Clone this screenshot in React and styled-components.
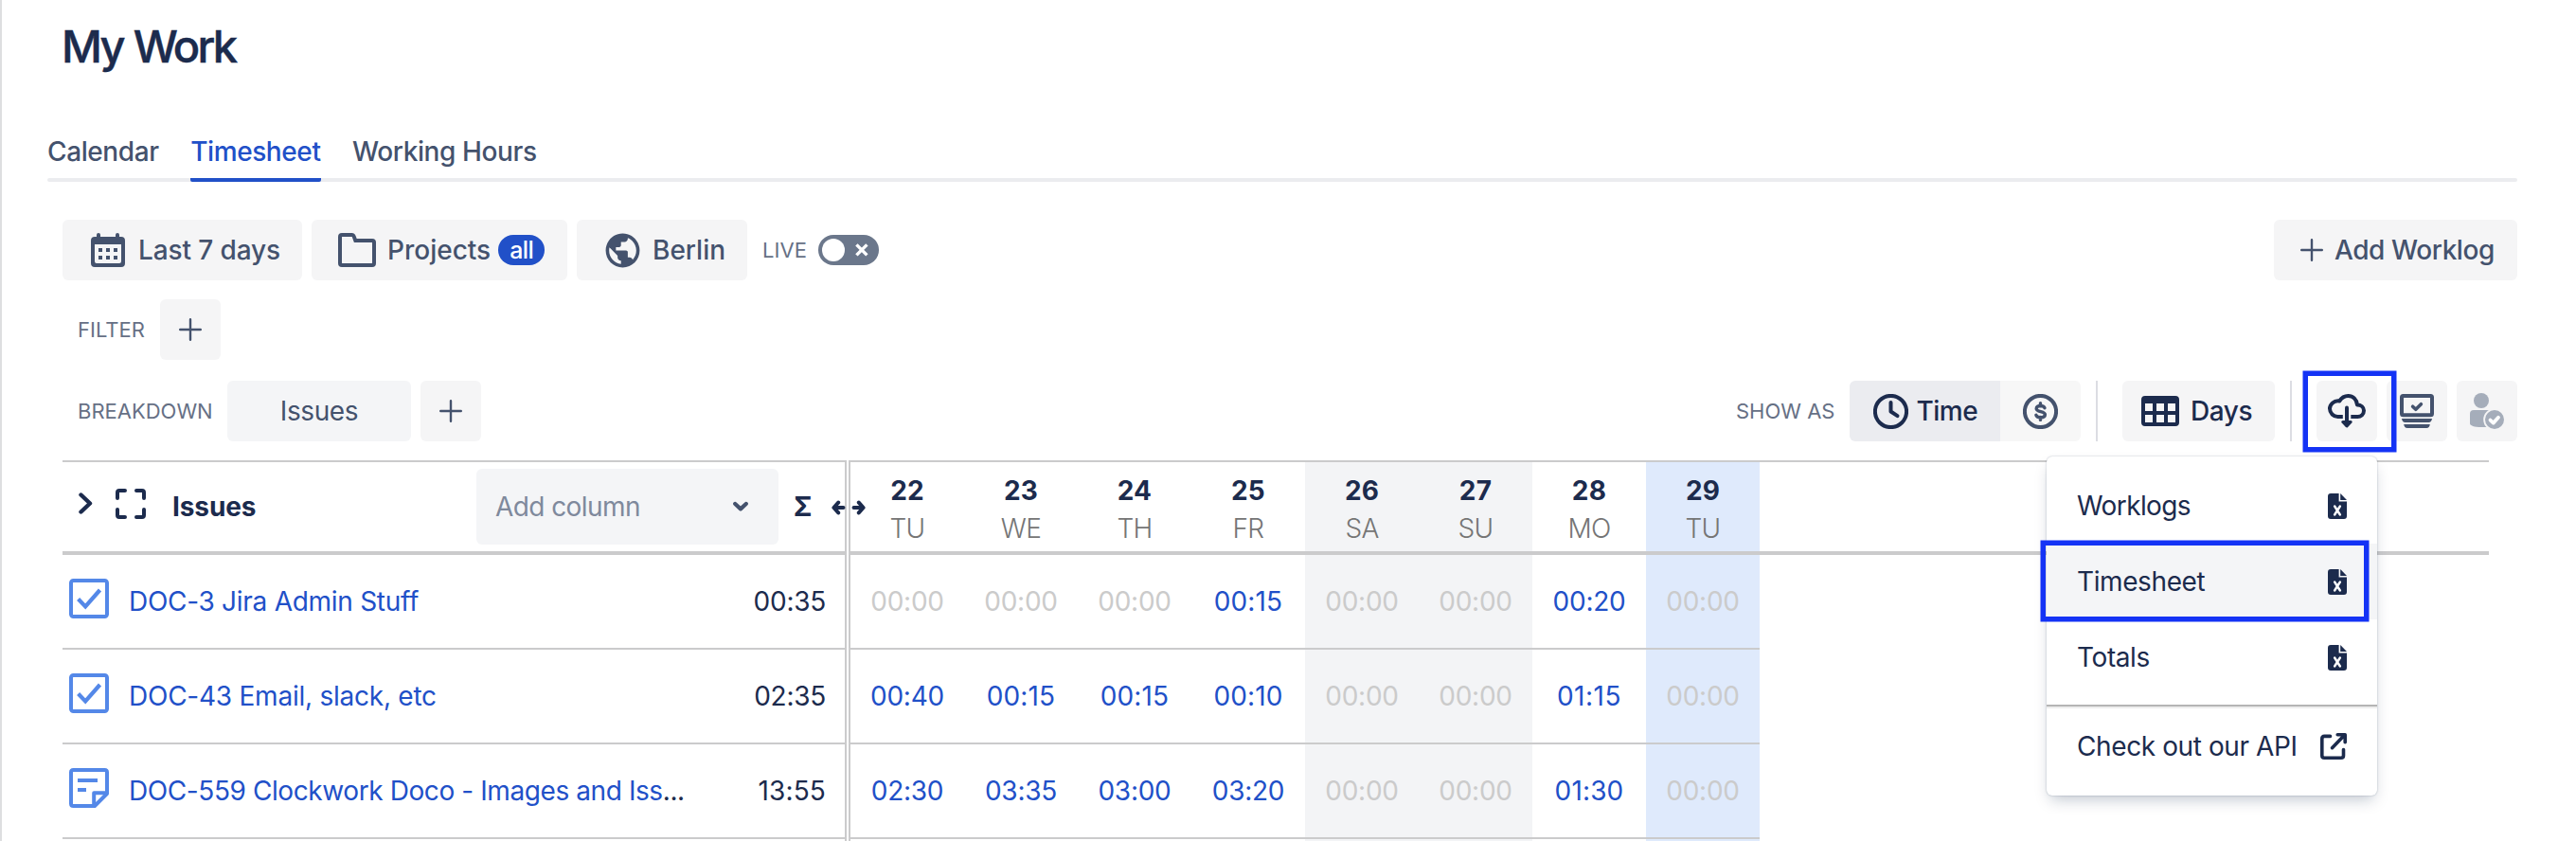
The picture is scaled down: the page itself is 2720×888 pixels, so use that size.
import React from 'react';
import styled, { createGlobalStyle } from 'styled-components';
import { MdPublic } from 'react-icons/md';

const GlobalStyle = createGlobalStyle`
  * {
    box-sizing: border-box;
  }
  body {
    margin: 0;
    background-color: white;
    font-family: Inter, "Liberation Sans", sans-serif;
    font-size: 28px;
    letter-spacing: -0.4px;
    color: #1c2b4d;
  }
  svg {
    display: block;
    flex: none;
  }
`;

const Page = styled.div`
  position: relative;
  width: 2720px;
  height: 888px;
  overflow: hidden;
  padding: 18px 62px 0 48px;
  border-left: 2px solid #dddee0;
`;

const Title = styled.h1`
  margin: 0 0 53px 15px;
  font-size: 47px;
  font-weight: 500;
  line-height: 61px;
  letter-spacing: -2.7px;
  word-spacing: 1px;
  -webkit-text-stroke: 0.5px currentColor;
`;

const Tabs = styled.nav`
  display: flex;
  gap: 33.5px;
  height: 60px;
  position: relative;
  &::after {
    content: '';
    position: absolute;
    left: 0;
    right: 0;
    bottom: 0;
    height: 4px;
    border-radius: 2px;
    background-color: #ebecef;
  }
`;

const Tab = styled.a`
  position: relative;
  z-index: 1;
  height: 60px;
  line-height: 56px;
  font-weight: 500;
  white-space: nowrap;
  color: ${({ $active }) => ($active ? '#2150c8' : '#44526d')};
  border-bottom: 4px solid ${({ $active }) => ($active ? '#2150c8' : 'transparent')};
  border-radius: 2px;
`;

const Bar = styled.div`
  display: flex;
  align-items: center;
  height: 64px;
  margin-top: ${({ $top }) => $top}px;
  padding-left: ${({ $left }) => $left || 16}px;
  gap: 10px;
`;

const Label = styled.span`
  width: ${({ $width }) => $width}px;
  margin-right: -10px;
  font-size: 22px;
  letter-spacing: 0;
  white-space: nowrap;
  color: #667085;
`;

const LiveLabel = styled(Label)`
  width: 59px;
  margin-left: 6px;
  letter-spacing: 0.1px;
`;

const Button = styled.button`
  display: flex;
  align-items: center;
  position: relative;
  flex: none;
  width: ${({ $width }) => $width || 64}px;
  height: 64px;
  padding: 0 0 0 ${({ $pad }) => $pad}px;
  gap: ${({ $gap }) => $gap || 12}px;
  border: none;
  border-radius: 6px;
  background-color: #f5f5f6;
  color: ${({ $dark }) => ($dark ? '#1c2b4d' : '#44526d')};
  font-family: inherit;
  font-size: 28px;
  font-weight: 500;
  letter-spacing: ${({ $spacing }) => $spacing || 0}px;
  white-space: nowrap;
`;

const BreakdownButton = styled(Button)`
  justify-content: center;
  background-color: #f4f5f7;
  font-weight: 400;
`;

const IconButton = styled(Button)`
  justify-content: center;
  z-index: ${({ $raised }) => ($raised ? 1 : 0)};
`;

const Badge = styled.span`
  width: 49px;
  height: 32px;
  margin-left: -4px;
  border-radius: 16px;
  background-color: #2150c8;
  color: white;
  font-size: 25px;
  line-height: 32px;
  text-align: center;
  letter-spacing: -0.6px;
`;

const GlobeIcon = styled(MdPublic)`
  width: 43px;
  height: 43px;
  margin: 0 -3.5px;
`;

const Toggle = styled.div`
  display: flex;
  align-items: center;
  justify-content: space-between;
  width: 64px;
  height: 32px;
  padding: 0 10px 0 4px;
  border-radius: 16px;
  background-color: #6b778b;
`;

const Knob = styled.span`
  width: 24px;
  height: 24px;
  border-radius: 50%;
  background-color: white;
`;

const Tools = styled.div`
  display: flex;
  align-items: center;
  gap: 10px;
  margin-left: auto;
`;

const Segments = styled.div`
  display: flex;
`;

const Segment = styled(Button)`
  border-radius: ${({ $last }) => ($last ? '0 6px 6px 0' : '6px 0 0 6px')};
  background-color: ${({ $active }) => ($active ? '#ebecf0' : '#f7f7f7')};
`;

const Divider = styled.i`
  width: 2px;
  height: 64px;
  margin: 0 16px 0 6px;
  background-color: #dcdde3;
`;

const Highlight = styled.span`
  position: absolute;
  left: ${({ $x }) => $x}px;
  top: ${({ $y }) => $y}px;
  width: ${({ $width }) => $width}px;
  height: ${({ $height }) => $height}px;
  border: 5px solid #1433f5;
  box-shadow: 0 0 0 0.5px #1433f5;
  pointer-events: none;
`;

const Table = styled.section`
  display: flex;
  width: 2562px;
  margin: 20px 0 0 16px;
`;

const IssuesPane = styled.div`
  position: relative;
  width: 828px;
  margin-right: 2px;
  border-right: 2px solid #cbcbcc;
`;

const DaysPane = styled.div`
  flex: 1;
  border-left: 2px solid #cbcbcc;
`;

const HeaderRow = styled.div`
  display: flex;
  align-items: center;
  height: 100px;
  border-top: 2px solid #cbcbcc;
  border-bottom: 4px solid #cbcbcc;
`;

const IssuesHeader = styled(HeaderRow)`
  padding: 0 35px 0 16px;
  font-weight: 700;
  svg {
    margin-bottom: 6px;
  }
`;

const HeaderName = styled.span`
  margin-left: 28px;
  letter-spacing: -0.1px;
`;

const ColumnSelect = styled.div`
  display: flex;
  align-items: center;
  justify-content: space-between;
  width: 319px;
  height: 80px;
  margin: 0 16px 0 auto;
  padding: 0 32px 0 20px;
  border-radius: 6px;
  background-color: #f4f5f7;
  color: #7f899c;
  font-weight: 400;
  letter-spacing: -0.57px;
  svg {
    margin-bottom: 0;
  }
`;

const ResizeHandle = styled.div`
  position: absolute;
  left: 812px;
  top: 42px;
  z-index: 1;
`;

const Day = styled.div`
  width: 120px;
  height: 94px;
  padding-top: 10px;
  line-height: 40px;
  text-align: center;
  background-color: ${({ $bg }) => $bg};
`;

const DayNumber = styled.div`
  font-weight: 700;
  letter-spacing: 0.2px;
`;

const DayName = styled.div`
  font-weight: 300;
  letter-spacing: -0.7px;
  color: #757575;
`;

const Row = styled.div`
  display: flex;
  align-items: center;
  height: 100px;
  border-bottom: 2px solid #cbcbcc;
  white-space: nowrap;
`;

const IssueRow = styled(Row)`
  padding: 0 20px 0 7px;
  svg {
    margin: 0 21px 6px 0;
  }
`;

const DaysRow = styled(Row)`
  width: 960px;
`;

const IssueLink = styled.a`
  color: #2150c8;
  letter-spacing: ${({ $spacing }) => $spacing}px;
`;

const Sum = styled.span`
  margin-left: auto;
  letter-spacing: ${({ $spacing }) => $spacing}px;
`;

const Cell = styled.div`
  width: 120px;
  height: 98px;
  line-height: 98px;
  text-align: center;
  letter-spacing: ${({ $spacing }) => $spacing}px;
  color: ${({ $empty }) => ($empty ? '#cbcbcb' : '#2150c8')};
  background-color: ${({ $bg }) => $bg};
`;

const Menu = styled.div`
  position: absolute;
  left: 2159px;
  top: 482px;
  z-index: 2;
  width: 349px;
  height: 358px;
  padding: 12px 0;
  border-radius: 6px;
  background-color: white;
  box-shadow: 0 0 2px rgba(9, 30, 66, 0.31), 0 8px 16px -4px rgba(9, 30, 66, 0.25);
`;

const MenuItem = styled.div`
  position: relative;
  display: flex;
  align-items: center;
  justify-content: space-between;
  height: 80px;
  padding: 0 32px;
  background-color: ${({ $selected }) => ($selected ? '#f4f5f7' : 'transparent')};
  letter-spacing: ${({ $spacing }) => $spacing || -0.4}px;
`;

const MenuLine = styled.hr`
  height: 4px;
  margin: 10px 0 0;
  border: none;
  border-top: 2px solid #b5b5b5;
  background-color: #eeeeee;
`;

const days = [
  { number: 22, name: 'TU' },
  { number: 23, name: 'WE' },
  { number: 24, name: 'TH' },
  { number: 25, name: 'FR' },
  { number: 26, name: 'SA', bg: '#f3f4f6' },
  { number: 27, name: 'SU', bg: '#f3f4f6' },
  { number: 28, name: 'MO' },
  { number: 29, name: 'TU', bg: '#dfeafc' },
];

const issues = [
  {
    name: 'DOC-3 Jira Admin Stuff',
    spacing: -0.28,
    total: '00:35',
    times: ['00:00', '00:00', '00:00', '00:15', '00:00', '00:00', '00:20', '00:00'],
  },
  {
    name: 'DOC-43 Email, slack, etc',
    spacing: -0.24,
    total: '02:35',
    times: ['00:40', '00:15', '00:15', '00:10', '00:00', '00:00', '01:15', '00:00'],
  },
  {
    name: 'DOC-559 Clockwork Doco - Images and Iss',
    spacing: -0.41,
    cut: true,
    note: true,
    total: '13:55',
    times: ['02:30', '03:35', '03:00', '03:20', '00:00', '00:00', '01:30', '00:00'],
  },
];

// the digit 1 is narrow, so times that hold it get a little more air
const timeSpacing = (time) => -0.26 + 0.4 * (time.split('1').length - 1);

const PlusIcon = () => (
  <svg width="24" height="24" fill="none" stroke="currentColor" strokeWidth="2.4" strokeLinecap="round">
    <path d="M12 1.2v21.6M1.2 12h21.6" />
  </svg>
);

const CalendarIcon = () => (
  <svg width="36" height="36" fill="currentColor">
    <path d="M6 4V2a2 2 0 0 1 4 0v2h16V2a2 2 0 0 1 4 0v2h2a4 4 0 0 1 4 4v24a4 4 0 0 1-4 4H4a4 4 0 0 1-4-4V8a4 4 0 0 1 4-4zM4 12v18a2 2 0 0 0 2 2h24a2 2 0 0 0 2-2V12z" fillRule="evenodd" />
    <path d="M8 16h4v4H8zM16 16h4v4h-4zM24 16h4v4h-4zM8 24h4v4H8zM16 24h4v4h-4zM24 24h4v4h-4z" />
  </svg>
);

const FolderIcon = () => (
  <svg width="40" height="36" fill="none" stroke="currentColor" strokeWidth="4">
    <path d="M4 2h10.5q1.6 0 2.2 1.6L18.3 8H36q2 0 2 2v22q0 2-2 2H4q-2 0-2-2V4q0-2 2-2z" />
  </svg>
);

const CrossIcon = () => (
  <svg width="16" height="16" fill="none" stroke="white" strokeWidth="3.4">
    <path d="M2.4 2.4l11 11M13.4 2.4l-11 11" />
  </svg>
);

const ClockIcon = () => (
  <svg width="37" height="37" fill="none" stroke="currentColor" strokeWidth="4" strokeLinecap="round" strokeLinejoin="round">
    <circle cx="18.5" cy="18.5" r="16.6" />
    <path d="M18.5 9v9.5l7 4.6" />
  </svg>
);

const DollarIcon = () => (
  <svg width="37" height="37" fill="none" stroke="currentColor" strokeLinecap="round">
    <circle cx="18.5" cy="18.5" r="16.6" strokeWidth="4" />
    <path d="M18.5 9.8v3M18.5 24.4v3M23 14.7c-.8-1.6-2.6-2.2-4.6-2.2-2.4 0-4.2 1-4.2 2.9 0 4 9.2 2.3 9.2 6.4 0 2-2 3-4.6 3-2.2 0-4.2-.7-4.9-2.5" strokeWidth="3.4" />
  </svg>
);

const GridIcon = () => (
  <svg width="40" height="32" fill="currentColor">
    <path d="M4 0h32a4 4 0 0 1 4 4v24a4 4 0 0 1-4 4H4a4 4 0 0 1-4-4V4a4 4 0 0 1 4-4zM4 8v8h8V8zM16 8v8h8V8zM28 8v8h8V8zM4 20v8h8v-8zM16 20v8h8v-8zM28 20v8h8v-8z" fillRule="evenodd" />
  </svg>
);

const CloudIcon = () => (
  <svg width="40" height="36" fill="none" stroke="currentColor" strokeWidth="4" strokeLinejoin="round">
    <path d="M15.8 24H10.5A8.5 8.5 0 0 1 2 15.6C2 10.8 6.4 6.6 12.3 7.5 14.3 4.2 17.6 2 21.5 2c5 0 8.7 3.6 9.5 9.4 4 0 7 2.6 7 6.2 0 3.7-3 6.4-6.6 6.4h-7.1" />
    <path d="M20 14.5V31" strokeLinecap="round" />
    <path d="M15.8 29.5h8.4L20 34z" fill="currentColor" strokeWidth="3" />
  </svg>
);

const ScreenIcon = () => (
  <svg width="36" height="36" fill="currentColor">
    <rect x="2" y="2" width="32" height="20.3" rx="1.5" fill="none" stroke="currentColor" strokeWidth="4" />
    <path d="M13.6 13.2l3.2 3.1 5.6-5.6" fill="none" stroke="currentColor" strokeWidth="3.6" strokeLinecap="round" strokeLinejoin="round" />
    <path d="M2 26h32q-.6 4-3.6 4H5.6Q2.6 30 2 26zM4.2 32h27.6q-.6 4-3.6 4H7.8q-3 0-3.6-4z" />
  </svg>
);

const PersonIcon = () => (
  <svg width="36" height="38" fill="#a5adba">
    <circle cx="12" cy="8" r="8" />
    <path d="M4 18h16a4 4 0 0 1 4 4v14H12C4.5 36 0 34.5 0 32V22a4 4 0 0 1 4-4z" />
    <circle cx="26" cy="28" r="11.8" fill="#f5f5f6" />
    <circle cx="26" cy="28" r="10" />
    <path d="M21.5 28.6l3.2 3 5.3-5.8" fill="none" stroke="white" strokeWidth="3.8" strokeLinecap="round" strokeLinejoin="round" />
  </svg>
);

const ChevronRightIcon = () => (
  <svg width="16" height="24" fill="none" stroke="currentColor" strokeWidth="4.4" strokeLinecap="round" strokeLinejoin="round">
    <path d="M3.5 2.5l9.5 9-9.5 9" />
  </svg>
);

const ExpandIcon = styled(({ className }) => (
  <svg className={className} width="32" height="32" fill="none" stroke="currentColor" strokeWidth="4" strokeLinecap="round">
    <path d="M10 2H4q-2 0-2 2v6M22 2h6q2 0 2 2v6M30 22v6q0 2-2 2h-6M10 30H4q-2 0-2-2v-6" />
  </svg>
))`
  margin-left: 24px;
`;

const ChevronDownIcon = () => (
  <svg width="16" height="12" fill="none" stroke="#44526d" strokeWidth="4.2" strokeLinecap="round" strokeLinejoin="round">
    <path d="M2.2 3l5.8 5.4L13.8 3" />
  </svg>
);

const ResizeIcon = () => (
  <svg width="36" height="16" fill="none" stroke="currentColor" strokeWidth="4" strokeLinecap="round" strokeLinejoin="round">
    <path d="M12.5 8H3M7.2 2.6L2.4 8l4.8 5.4M23.5 8H33M28.8 2.6L33.6 8l-4.8 5.4" />
  </svg>
);

const TaskIcon = () => (
  <svg width="42" height="42" fill="none" stroke="#5488e8" strokeWidth="4">
    <rect x="2" y="2" width="38" height="38" rx="2.5" />
    <path d="M9.6 21.5l7.6 7.9L32.5 12" strokeWidth="4.2" />
  </svg>
);

const NoteIcon = () => (
  <svg width="42" height="42" fill="none" stroke="#5488e8" strokeWidth="4" strokeLinejoin="round">
    <path d="M4.5 2h33Q40 2 40 4.5V27L27 40H4.5Q2 40 2 37.5v-33Q2 2 4.5 2z" />
    <path d="M9 13h21M9 23h9M26.2 39V26.2H40" />
  </svg>
);

const SheetIcon = () => (
  <svg width="20" height="27" fill="currentColor">
    <path d="M3 0h8.6v8.6H20V24a3 3 0 0 1-3 3H3a3 3 0 0 1-3-3V3a3 3 0 0 1 3-3z" />
    <path d="M13.2 0L20 7H13.2z" />
    <path d="M7.2 13.6l5.6 8.8M12.8 13.6l-5.6 8.8" fill="none" stroke="white" strokeWidth="2.6" strokeLinecap="round" />
  </svg>
);

const ExternalIcon = () => (
  <svg width="28" height="28" fill="none" stroke="currentColor" strokeWidth="3.6" strokeLinecap="round" strokeLinejoin="round">
    <path d="M10.5 3.4H4.3q-2.5 0-2.5 2.5V23.7q0 2.5 2.5 2.5H22q2.5 0 2.5-2.5V17.5" />
    <path d="M12.5 15.7L24.5 3.2M18.2 1.8H26.2V9.8" />
  </svg>
);

const Toolbar = () => (
  <>
    <Bar $top={40}>
      <Button $width={253} $pad={30} $gap={14} $spacing={-0.11}><CalendarIcon />Last 7 days</Button>
      <Button $width={270} $pad={28}><FolderIcon />Projects<Badge>all</Badge></Button>
      <Button $width={180} $pad={30} $gap={14}><GlobeIcon />Berlin</Button>
      <LiveLabel>LIVE</LiveLabel>
      <Toggle>
        <Knob />
        <CrossIcon />
      </Toggle>
      <Tools>
        <Button $width={257} $pad={28} $spacing={-0.42}><PlusIcon />Add Worklog</Button>
      </Tools>
    </Bar>

    <Bar $top={20} $left={32}>
      <Label $width={87}>FILTER</Label>
      <IconButton><PlusIcon /></IconButton>
    </Bar>

    <Bar $top={22} $left={32}>
      <Label $width={158}>BREAKDOWN</Label>
      <BreakdownButton $width={194} $spacing={-0.39}>Issues</BreakdownButton>
      <IconButton><PlusIcon /></IconButton>
      <Tools>
        <Label $width={120}>SHOW AS</Label>
        <Segments>
          <Segment $active $dark $width={159} $pad={24.5} $gap={9} $spacing={-0.5}><ClockIcon />Time</Segment>
          <Segment $last $width={85} $pad={24}><DollarIcon /></Segment>
        </Segments>
        <Divider />
        <Button $dark $width={161} $pad={20} $spacing={-0.43}><GridIcon />Days</Button>
        <Divider />
        <IconButton $dark $raised>
          <CloudIcon />
          <Highlight $x={-14} $y={-10} $width={98} $height={85} />
        </IconButton>
        <IconButton><ScreenIcon /></IconButton>
        <IconButton><PersonIcon /></IconButton>
      </Tools>
    </Bar>
  </>
);

const Timesheet = () => (
  <Table>
    <IssuesPane>
      <IssuesHeader>
        <ChevronRightIcon />
        <ExpandIcon />
        <HeaderName>Issues</HeaderName>
        <ColumnSelect>Add column<ChevronDownIcon /></ColumnSelect>
        <span>Σ</span>
      </IssuesHeader>
      <ResizeHandle><ResizeIcon /></ResizeHandle>
      {issues.map((issue) => (
        <IssueRow key={issue.name}>
          {issue.note ? <NoteIcon /> : <TaskIcon />}
          <IssueLink $spacing={issue.spacing}>{issue.name}</IssueLink>
          {issue.cut && <span>...</span>}
          <Sum $spacing={timeSpacing(issue.total)}>{issue.total}</Sum>
        </IssueRow>
      ))}
    </IssuesPane>

    <DaysPane>
      <HeaderRow>
        {days.map((day) => (
          <Day key={day.number} $bg={day.bg}>
            <DayNumber>{day.number}</DayNumber>
            <DayName>{day.name}</DayName>
          </Day>
        ))}
      </HeaderRow>
      {issues.map((issue) => (
        <DaysRow key={issue.name}>
          {issue.times.map((time, i) => (
            <Cell
              key={days[i].number}
              $bg={days[i].bg}
              $empty={time === '00:00'}
              $spacing={timeSpacing(time)}
            >
              {time}
            </Cell>
          ))}
        </DaysRow>
      ))}
      <DaysRow>
        {days.map((day) => <Cell key={day.number} $bg={day.bg} />)}
      </DaysRow>
    </DaysPane>
  </Table>
);

const ExportMenu = () => (
  <Menu>
    <MenuItem $spacing={-0.6}>Worklogs<SheetIcon /></MenuItem>
    <MenuItem $selected>
      Timesheet
      <SheetIcon />
      <Highlight $x={-6} $y={-3} $width={346} $height={85} />
    </MenuItem>
    <MenuItem>Totals<SheetIcon /></MenuItem>
    <MenuLine />
    <MenuItem>Check out our API<ExternalIcon /></MenuItem>
  </Menu>
);

const App = () => {
  return (
    <>
      <GlobalStyle />
      <Page>
        <Title>My Work</Title>
        <Tabs>
          <Tab>Calendar</Tab>
          <Tab $active>Timesheet</Tab>
          <Tab>Working Hours</Tab>
        </Tabs>
        <Toolbar />
        <Timesheet />
        <ExportMenu />
      </Page>
    </>
  );
};

export default App;
